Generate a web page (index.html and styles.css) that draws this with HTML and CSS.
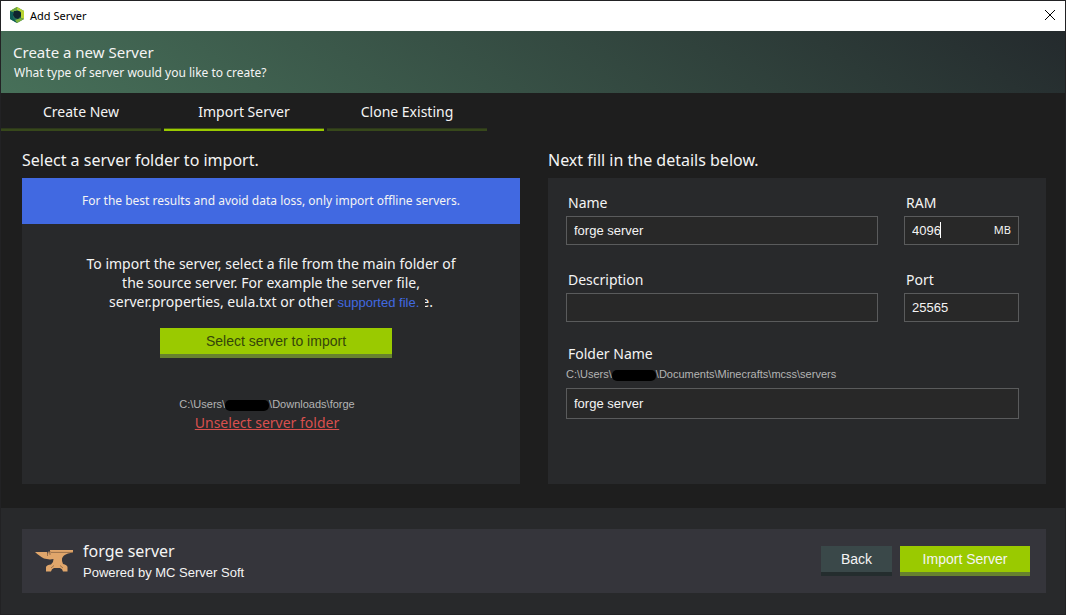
FILE: index.html
```html
<!DOCTYPE html>
<html lang="en">
<head>
<meta charset="utf-8">
<title>Add Server</title>
<link rel="stylesheet" href="styles.css">
</head>
<body>
<div class="window">
  <header class="titlebar">
    <svg class="app-icon" viewBox="0 0 14 16" aria-hidden="true">
      <path d="M7 0 14 4 14 12 7 16 0 12 0 4Z" fill="#1f6b5c"/>
      <path d="M7 0 14 4 14 12 11 11 11 5 7 3 2 5 0 4Z" fill="#b9d433"/>
      <path d="M7 0 0 4 2 5 7 3Z" fill="#6ba644"/>
      <path d="M14 12 7 16 5 13 11 11Z" fill="#7fb23c"/>
      <path d="M0 4 3 5 3 11 7 16 0 12Z" fill="#0d5b55"/>
      <path d="M4 4 9 4 11 6 11 9 8 12 5 11 3 8Z" fill="#10242e"/>
    </svg>
    <span class="title">Add Server</span>
    <button class="close" type="button" aria-label="Close">
      <svg viewBox="0 0 10 10" aria-hidden="true"><path d="M0 0 10 10M10 0 0 10" stroke="#000" fill="none"/></svg>
    </button>
  </header>

  <section class="hero">
    <h1>Create a new Server</h1>
    <p>What type of server would you like to create?</p>
  </section>

  <nav class="tabs">
    <button class="tab" type="button">Create New</button>
    <button class="tab active" type="button">Import Server</button>
    <button class="tab" type="button">Clone Existing</button>
  </nav>

  <main class="columns">
    <section class="column">
      <h2>Select a server folder to import.</h2>
      <div class="panel">
        <p class="notice">For the best results and avoid data loss, only import offline servers.</p>
        <p class="help">To import the server, select a file from the main folder of<br>the source server. For example the server file,<br>server.properties, eula.txt or other <a class="supported" href="#">supported file.</a><span class="tail">e.</span></p>
        <div class="action"><button class="btn primary select" type="button">Select server to import</button></div>
        <div class="selection">
          <span class="path">C:\Users\<span class="redacted"></span>\Downloads\forge</span>
          <a class="unselect" href="#">Unselect server folder</a>
        </div>
      </div>
    </section>

    <section class="column">
      <h2>Next fill in the details below.</h2>
      <form class="panel form">
        <div class="field">
          <label for="name">Name</label>
          <input id="name" type="text" value="forge server">
        </div>
        <div class="field">
          <label for="ram">RAM</label>
          <div class="unit-box">
            <input id="ram" type="text" value="4096">
            <span class="caret"></span>
            <span class="unit">MB</span>
          </div>
        </div>
        <div class="field">
          <label for="description">Description</label>
          <input id="description" type="text">
        </div>
        <div class="field">
          <label for="port">Port</label>
          <input id="port" type="text" value="25565">
        </div>
        <div class="field wide">
          <label for="folder">Folder Name</label>
          <span class="path">C:\Users\<span class="redacted"></span>\Documents\Minecrafts\mcss\servers</span>
          <input id="folder" type="text" value="forge server">
        </div>
      </form>
    </section>
  </main>

  <footer class="footer">
    <div class="summary">
      <svg class="anvil" viewBox="0 0 38 22" aria-hidden="true">
        <path fill="#e0a66b" d="M0 2H12L13 4 13.500 1.500H14.500L15 4V0H38V2.500L33 3.500Q28 5 27 8.500L27 11 28 14Q32 15 32.500 17V21.500H28Q27.500 18.500 25 18H19Q16.500 18.500 16 21.500H11V17Q12 14.500 16 14.500L18 12 18.500 9 15 9.500Q8 9 5 6Q2 4 0 2Z"/>
        <path stroke="#6b4e38" stroke-width=".6" fill="none" d="M16 2.400H38M12.500 3V6M15 1V5"/>
        <path stroke="#7d5c42" stroke-width=".7" fill="none" d="M16 18 19 15.500M28 18 25 15.500"/>
      </svg>
      <div class="summary-text">
        <strong>forge server</strong>
        <span>Powered by MC Server Soft</span>
      </div>
      <button class="btn secondary" type="button">Back</button>
      <button class="btn primary" type="button">Import Server</button>
    </div>
  </footer>
</div>
</body>
</html>
```
FILE: styles.css
```css
* { box-sizing: border-box; }
body {
  margin: 0;
  background: #1e1e1e;
  color: #f4f4f4;
  font-family: "Noto Sans", "Open Sans", sans-serif;
  font-size: 14px;
}
h1, h2, p { margin: 0; font-weight: 400; }
button, input { font: inherit; color: inherit; margin: 0; }
.window {
  display: flex;
  flex-direction: column;
  min-height: 100vh;
  border: 1px solid #222224;
}
.titlebar {
  display: flex;
  align-items: center;
  height: 30px;
  padding: 0 10px 2px 9px;
  background: #fff;
  color: #000;
  font-size: 11px;
}
.app-icon { width: 14px; height: 16px; }
.title { flex: 1; padding-left: 6px; }
.close {
  display: flex;
  padding: 0;
  border: 0;
  background: none;
}
.close svg { width: 10px; height: 10px; overflow: visible; }
.hero {
  height: 62px;
  padding: 11px 12px;
  background: linear-gradient(35deg, #477059, #242a2d);
}
.hero h1 { font-size: 15px; line-height: 20px; }
.hero p { padding-left: 1px; font-size: 12px; line-height: 22px; }
.tabs { display: flex; gap: 3px; }
.tab {
  width: 160px;
  height: 38px;
  padding: 0;
  border: 0;
  border-bottom: 2px solid #37481b;
  background: none;
  box-shadow: inset 0 -1px #2d381b;
}
.tab.active { border-color: #9aca00; box-shadow: inset 0 -1px #4b5e14; }
.columns {
  display: flex;
  flex: 1;
  gap: 28px;
  padding: 17px 19px 24px 21px;
}
.column { display: flex; flex: 1; flex-direction: column; min-width: 0; }
h2 { padding-bottom: 6px; font-size: 16px; line-height: 24px; }
.panel { flex: 1; background: #28292b; }
.notice {
  background: #4169e1;
  font-size: 12px;
  line-height: 46px;
  text-align: center;
}
.help {
  padding-top: 30px;
  line-height: 19px;
  text-align: center;
}
.supported {
  position: relative;
  z-index: 1;
  padding-right: 6px;
  background: #28292b;
  color: #4169e1;
  font-family: "Liberation Sans", Arial, sans-serif;
  font-size: 13px;
  text-decoration: none;
}
.tail { margin-left: -4px; }
.action { display: flex; justify-content: center; padding: 16px 0 0 10px; }
.btn {
  height: 30px;
  padding: 0;
  border: 0;
  border-bottom: 4px solid;
  font-family: "Liberation Sans", Arial, sans-serif;
}
.primary { width: 130px; border-color: #67822e; background: #9aca00; }
.secondary { width: 71px; border-color: #242d2e; background: #3a4849; }
.select { width: 232px; color: #34450a; }
.selection {
  display: flex;
  flex-direction: column;
  align-items: center;
  padding: 38px 8px 0 0;
}
.path {
  color: #b4b4b4;
  font-family: "Liberation Sans", Arial, sans-serif;
  font-size: 11px;
  line-height: 16px;
}
.redacted {
  display: inline-block;
  width: 44px;
  height: 11px;
  border-radius: 5px;
  background: #000;
  vertical-align: -3px;
}
.unselect { color: #d9504e; line-height: 22px; }
.form {
  display: grid;
  grid-template-columns: 1fr 115px;
  align-content: start;
  gap: 22px 26px;
  padding: 12px 27px 0 18px;
}
.field { display: flex; flex-direction: column; min-width: 0; }
.field label { padding-left: 2px; line-height: 26px; }
.field input {
  width: 100%;
  height: 29px;
  padding: 0 7px;
  border: 1px solid #5a5b5c;
  background: #282828;
  outline: 0;
  font-family: "Liberation Sans", Arial, sans-serif;
  font-size: 13px;
}
.wide { grid-column: 1 / -1; }
.wide label { line-height: 20px; }
.wide .path { padding-bottom: 4px; line-height: 20px; }
.wide input { height: 31px; }
.unit-box { position: relative; }
.unit { position: absolute; top: 6px; right: 8px; font-size: 11px; line-height: 16px; }
.caret { position: absolute; top: 6px; left: 36px; width: 1px; height: 16px; background: #fff; }
.footer { padding: 21px 19px 21px 21px; background: #28292b; }
.summary {
  display: flex;
  align-items: center;
  gap: 8px;
  height: 64px;
  padding: 0 16px 0 13px;
  background: #35353b;
}
.anvil { width: 38px; height: 22px; }
.summary-text { display: flex; flex: 1; flex-direction: column; padding: 2px 0 0 2px; line-height: 21px; }
.summary-text strong { font-size: 16px; font-weight: 400; }
.summary-text span { font-family: "Liberation Sans", Arial, sans-serif; font-size: 13px; }
```
